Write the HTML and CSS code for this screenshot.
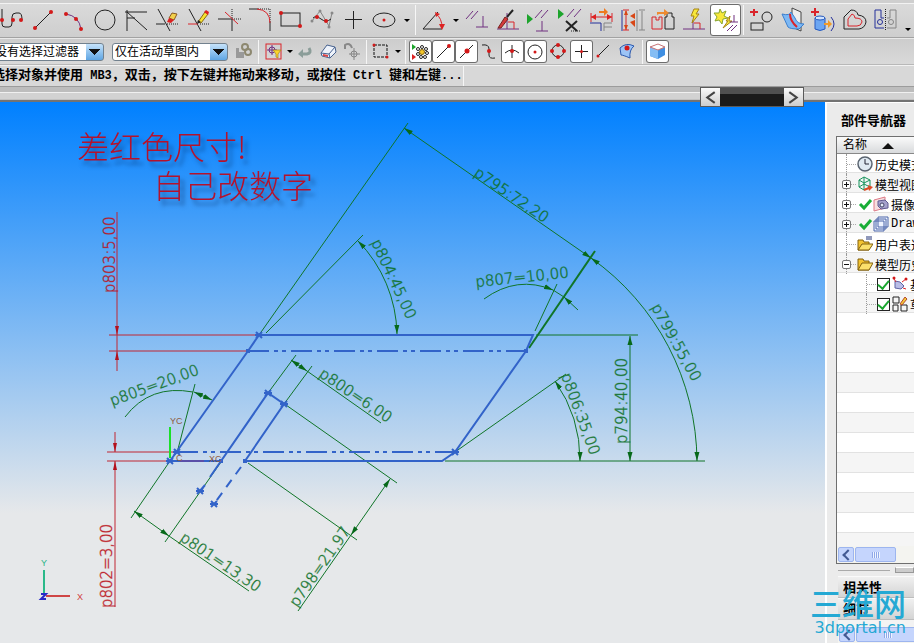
FILE: index.html
```html
<!DOCTYPE html>
<html lang="zh-CN">
<head>
    <meta charset="UTF-8">
    <meta name="viewport" content="width=device-width, initial-scale=1.0">
    <title>草图</title>
    <link rel="stylesheet" href="styles.css">
</head>
<body>
    <header class="toolbars">
        <div class="strip"></div>

        <!-- Sketch tools -->
        <div class="toolbar sketch-bar">
            <button class="tool" aria-label="轮廓"><svg viewBox="0 0 31 32"><path class="k" d="M5 5V20Q5 23 8 23H12Q15 23 15 19V13Q15 9 19 9H22Q25 9 25 16"/><g class="dot"><circle cx="5" cy="16" r="2"/><circle cx="16" cy="16" r="2"/><circle cx="24" cy="16" r="2"/></g></svg></button>
            <button class="tool" aria-label="直线"><svg viewBox="0 0 31 32"><path class="k" d="M7 24L23 8"/><g class="dot"><circle cx="7" cy="24" r="2"/><circle cx="23" cy="8" r="2"/></g></svg></button>
            <button class="tool" aria-label="圆弧"><svg viewBox="0 0 31 32"><path class="p" d="M7 10Q20 12 22 25"/><g class="dot"><circle cx="7" cy="10" r="2"/><circle cx="17" cy="15" r="2"/><circle cx="22" cy="25" r="2"/></g></svg></button>
            <button class="tool" aria-label="圆"><svg viewBox="0 0 31 32"><circle class="k" cx="15" cy="16" r="10"/></svg></button>
            <button class="tool" aria-label="派生直线"><svg viewBox="0 0 31 32"><path class="k" d="M6 6V27M4 8H26M6 8L26 26M6 14H14"/></svg></button>
            <button class="tool" aria-label="快速修剪"><svg viewBox="0 0 31 32"><path class="k" d="M6 5L18 27M4 20H13"/><path class="k dots" d="M15 20H27"/><path d="M17 14L20 9L25 10L22 16Z" fill="#f2d04a" stroke="#8a5a20"/><path d="M15 18L17 14L22 16L19 19Z" fill="#d22"/></svg></button>
            <button class="tool" aria-label="快速延伸"><svg viewBox="0 0 31 32"><path class="k" d="M6 5L18 27"/><path class="r" d="M5 20H15"/><path class="k dots" d="M17 20H27"/><path d="M15 18L22 8L25 10L18 19Z" fill="#f7e430" stroke="#8a6a10"/><path d="M21 8L23 6L26 8L25 11Z" fill="#d22"/><path d="M14 20L15 16L18 18Z" fill="#222"/></svg></button>
            <button class="tool" aria-label="制作拐角"><svg viewBox="0 0 31 32"><path class="k" d="M18 15V27M4 15H18"/><path class="k dots" d="M18 5V15M18 15H27"/><path class="r" d="M11 8L24 20"/></svg></button>
            <button class="tool" aria-label="圆角"><svg viewBox="0 0 31 32"><path class="k" d="M4 5H13M25 18V27"/><path class="k dots" d="M13 5H25V18"/><path class="r" d="M12 5Q25 6 25 19"/></svg></button>
            <button class="tool" aria-label="矩形"><svg viewBox="0 0 31 32"><rect class="k" x="5" y="9" width="19" height="13"/><g class="dot"><circle cx="5" cy="9" r="2"/><circle cx="24" cy="22" r="2"/></g></svg></button>
            <button class="tool" aria-label="艺术样条"><svg viewBox="0 0 31 32"><path class="g" d="M5 17L13 7L22 22L25 9"/><path class="k" d="M6 14Q9 11 14 15T24 15"/><g fill="#888"><circle cx="5" cy="17" r="1.5"/><circle cx="13" cy="7" r="1.5"/><circle cx="25" cy="9" r="1.5"/><circle cx="22" cy="23" r="1.5"/></g><g class="dot"><circle cx="10" cy="13" r="2"/><circle cx="19" cy="17" r="2"/></g></svg></button>
            <button class="tool" aria-label="点"><svg viewBox="0 0 31 32"><path class="k" d="M15.5 7V25M7 15.5H24"/></svg></button>
            <button class="tool" aria-label="椭圆"><svg viewBox="0 0 31 32"><ellipse class="k" cx="15" cy="16" rx="11" ry="7"/><circle class="dot" cx="15" cy="16" r="1.5"/></svg></button>
            <button class="caret" aria-label="更多曲线"></button>
            <span class="sep"></span>
            <button class="tool" aria-label="自动判断的尺寸"><svg viewBox="0 0 31 32"><path class="k" d="M24 25H5L20 8"/><path class="r" d="M18 10Q24 14 24 24"/><path d="M17 8L22 10L18 13ZM21 20H27L24 26Z" fill="#d22"/></svg></button>
            <button class="caret" aria-label="更多尺寸"></button>
            <button class="tool" aria-label="约束"><svg viewBox="0 0 31 32"><path class="p" d="M4 15L11 7M9 15L16 7M21 12V23M14 23H26"/></svg></button>
            <button class="tool" aria-label="自动约束"><svg viewBox="0 0 31 32"><path class="p" d="M4 25H26M14 9V25"/><path class="r" d="M15 18H21V25"/><path d="M5 24L12 13L15 15L8 24Z" fill="#d43a3a" stroke="#722"/><path class="k" d="M14 13L20 6" stroke-width="2"/></svg></button>
            <button class="tool" aria-label="显示约束"><svg viewBox="0 0 31 32"><path d="M3 10L9 15L3 20Z" fill="#1da42c"/><path class="p" d="M11 14L18 6M17 14L24 6M18 17V27M12 27H24"/></svg></button>
            <button class="tool" aria-label="移除约束"><svg viewBox="0 0 31 32"><path d="M3 5L9 10L3 15Z" fill="#1da42c"/><path class="p" d="M12 13L19 5M19 13L26 5"/><path class="k" d="M11 17L22 27M22 17L11 27" stroke-width="2"/><path class="k dots" d="M16 27H26"/></svg></button>
            <button class="tool" aria-label="动画尺寸"><svg viewBox="0 0 31 32"><path class="r" d="M5 9V18M26 9V18M5 13H26"/><path d="M5 13L10 10V16ZM26 13L21 10V16Z" fill="#d22"/><path d="M13 7H18V4L22 8L18 12V9H13Z" fill="#ee7a20"/><path class="b" d="M4 19H15V27" fill="#fff"/><path class="g" d="M26 19H18V27M26 23H18"/></svg></button>
            <button class="tool" aria-label="转换参考"><svg viewBox="0 0 31 32"><path class="b" d="M5 6V27"/><path class="r" d="M9 7V26M6 6H12M6 26H12"/><path d="M7 11L9 6L11 11ZM7 21L9 26L11 21ZM18 9V15L13 12ZM13 18L18 16V23Z" fill="#d84716"/><path class="g" d="M25 7V26M22 6H28M22 26H28M20 6V27"/></svg></button>
            <button class="tool" aria-label="备选解"><svg viewBox="0 0 31 32"><path class="r" d="M4 25V13H8V16H11V13H14V25Z"/><path class="k" d="M17 25V13H19V9H24V13H26V25Z"/><path d="M9 11V8H16V5L21 9L16 12V10H11Z" fill="#ee8a30"/></svg></button>
            <button class="tool" aria-label="推断约束"><svg viewBox="0 0 31 32"><path class="p" d="M4 25H26M14 16V25"/><path class="r" d="M15 19H21V25"/><path d="M15 5L12 12H15L13 19L20 10H17L20 5Z" fill="#f8e83a" stroke="#a58315"/></svg></button>
            <button class="tool active" aria-label="创建推断约束"><svg viewBox="0 0 31 32"><path d="M10 5L12 9L16 7L14 12L18 14L13 15L12 20L9 16L5 17L7 13L4 9L9 9Z" fill="#f8e83a" stroke="#89a62f"/><path d="M20 12L16 17H18L13 24L22 17H19Z" fill="#f8e83a" stroke="#a58315"/><path class="p" d="M24 11V18M20 18H28M17 27L23 21M21 27L27 21"/></svg></button>
            <span class="sep"></span>
            <button class="tool" aria-label="偏置曲线"><svg viewBox="0 0 31 32"><path class="r" d="M8 5V12M4 8H12" stroke-width="2"/><circle class="k" cx="21" cy="13" r="5"/><rect class="k" x="5" y="19" width="12" height="7"/></svg></button>
            <button class="tool" aria-label="相交曲线"><svg viewBox="0 0 31 32"><path d="M15 4L24 8V27L15 23Z" fill="#eee" stroke="#444"/><path d="M5 10Q13 12 14 8L18 14Q20 20 27 20L22 25Q13 25 11 23Z" fill="#7db8f4" stroke="#3b7fce"/><path class="r" d="M13 10Q13 17 20 23" stroke-width="2"/></svg></button>
            <button class="tool" aria-label="投影曲线"><svg viewBox="0 0 31 32"><path class="r" d="M7 4V12M3 8H11" stroke-width="2"/><path d="M7 14V25Q12 28 17 25V14Z" fill="#6ca6f2" stroke="#2659bd"/><ellipse cx="12" cy="14" rx="5" ry="2" fill="#cfe3ff" stroke="#2659bd"/><path d="M16 19H20V16L24 20L20 24V21H16Z" fill="#f09a28"/><path class="b" d="M23 13Q29 20 23 27"/></svg></button>
            <button class="tool" aria-label="偏置轮廓"><svg viewBox="0 0 31 32"><path class="k" d="M5 25V13L12 6Q18 6 19 11Q27 12 27 18Q26 24 20 25Z"/><path class="r" d="M9 22V15L13 10Q16 11 16 14Q23 14 23 18Q22 22 18 22Z"/></svg></button>
            <button class="tool" aria-label="镜像曲线"><svg viewBox="0 0 31 32"><path class="b" d="M14 14H11V6H5V24H14"/><circle class="b" cx="10" cy="18" r="2.500"/><path class="g" d="M17 14H20V6H26V24H17"/><circle class="g" cx="21" cy="18" r="2.500"/><path class="k dots" d="M15.500 5V27"/></svg></button>
            <button class="caret low" aria-label="工具条选项"></button>
        </div>

        <!-- Selection filters and snap points -->
        <div class="toolbar select-bar">
            <select class="filter filter-type" aria-label="选择过滤器"><option>没有选择过滤器</option></select>
            <select class="filter filter-scope" aria-label="选择范围"><option>仅在活动草图内</option></select>
            <button class="snap" aria-label="规则"><svg viewBox="0 0 23 23"><path d="M4 8H7V12H12V18H4Z" fill="#999"/><circle cx="13" cy="7" r="3" fill="none" stroke="#8d8870" stroke-width="2"/><circle cx="16" cy="12" r="3" fill="none" stroke="#8d8870" stroke-width="2"/></svg></button>
            <span class="sep"></span>
            <button class="snap" aria-label="选择优先级"><svg viewBox="0 0 23 23"><rect class="r" x="4" y="4" width="15" height="15"/><path class="p" d="M5 10H15M10 5V15"/><circle class="p" cx="10" cy="10" r="3"/><path d="M11 10H19L16 14V18L14 17V14Z" fill="#fbd52c" stroke="#a8831b" stroke-width=".7"/></svg></button>
            <button class="caret" aria-label="选择优先级选项"></button>
            <button class="snap" aria-label="撤消选择"><svg viewBox="0 0 23 23"><path d="M7 14H13Q18 13 15 8" fill="none" stroke="#8b9d99" stroke-width="3"/><path d="M9 9V18L4 14Z" fill="#8b9d99"/></svg></button>
            <button class="snap" aria-label="取消全选"><svg viewBox="0 0 23 23"><path d="M4 13L10 5L18 7L19 12L13 18L5 16Z" fill="#eef3fb" stroke="#46618e"/><path d="M4 13L12 14L18 7M12 14L13 18" fill="none" stroke="#46618e"/><path d="M6 14L11 15V17L6 16Z" fill="#d44"/></svg></button>
            <button class="snap" aria-label="查找"><svg viewBox="0 0 23 23"><path d="M5 9V5Q10 2 12 8" fill="none" stroke="#888" stroke-width="2"/><path class="g" d="M9 14H20M14 8V20"/><circle class="g" cx="14" cy="14" r="3"/></svg></button>
            <span class="sep"></span>
            <button class="snap" aria-label="矩形选择"><svg viewBox="0 0 23 23"><rect x="4" y="5" width="13" height="12" fill="none" stroke="#111" stroke-dasharray="3 1"/><circle class="dot" cx="4" cy="5" r="1.500"/><circle class="dot" cx="17" cy="17" r="1.500"/></svg></button>
            <button class="caret" aria-label="选择方式"></button>
            <span class="sep"></span>
            <button class="snap active" aria-label="启用捕捉点"><svg viewBox="0 0 23 23"><path d="M3 4L7 7L3 10Z" fill="#1da42c"/><path d="M3 14L7 17L3 20Z" fill="#d22"/><g fill="#fff" stroke="#222"><circle cx="13" cy="7" r="1.500"/><circle cx="17" cy="9" r="1.500"/><circle cx="18" cy="13" r="1.500"/><circle cx="16" cy="17" r="1.500"/><circle cx="12" cy="17" r="1.500"/><circle cx="9" cy="14" r="1.500"/><circle cx="9" cy="9" r="1.500"/></g><circle cx="13" cy="12" r="2.500" fill="#f5c92c" stroke="#85630e"/></svg></button>
            <button class="snap active" aria-label="终点"><svg viewBox="0 0 23 23"><path class="k" d="M5 18L17 6"/><circle class="dot" cx="17" cy="6" r="2"/></svg></button>
            <button class="snap active" aria-label="中点"><svg viewBox="0 0 23 23"><path class="k" d="M5 18L18 5"/><circle class="dot" cx="12" cy="11" r="2.500"/></svg></button>
            <button class="snap" aria-label="控制点"><svg viewBox="0 0 23 23"><path class="k" d="M4 5Q11 4 11 9V15Q11 19 17 18"/><circle class="dot" cx="11" cy="11" r="2"/></svg></button>
            <button class="snap active" aria-label="交点"><svg viewBox="0 0 23 23"><path class="k" d="M4 13Q11 7 18 13M11 5V18"/><circle class="dot" cx="11" cy="11" r="2"/></svg></button>
            <button class="snap active" aria-label="圆弧中心"><svg viewBox="0 0 23 23"><circle class="k" cx="11" cy="12" r="7"/><circle class="dot" cx="11" cy="12" r="1.500"/></svg></button>
            <button class="snap" aria-label="象限点"><svg viewBox="0 0 23 23"><circle class="k" cx="11" cy="11" r="6"/><g class="dot"><circle cx="11" cy="5" r="2"/><circle cx="17" cy="11" r="2"/><circle cx="11" cy="17" r="2"/><circle cx="5" cy="11" r="2"/></g></svg></button>
            <button class="snap active" aria-label="现有点"><svg viewBox="0 0 23 23"><path class="k" d="M5 11.500H18M11.500 5V18"/><circle class="dot" cx="11.500" cy="11.500" r="1.500"/></svg></button>
            <button class="snap" aria-label="曲线上的点"><svg viewBox="0 0 23 23"><path class="k" d="M4 17L16 5"/><circle class="dot" cx="5" cy="16" r="1.500"/></svg></button>
            <button class="snap" aria-label="面上的点"><svg viewBox="0 0 23 23"><path d="M4 8Q10 2 18 6Q13 10 14 18Q7 15 5 15Z" fill="#9cc4f6" stroke="#2c58ad"/><circle class="dot" cx="11" cy="8" r="2.500"/></svg></button>
            <span class="sep"></span>
            <button class="snap active" aria-label="着色"><svg viewBox="0 0 23 23"><path d="M4 7L12 4L19 7V15L12 19L4 16Z" fill="#3f8fe2"/><path d="M4 7L12 10V19L4 16Z" fill="#84bdf4"/><path d="M4 7L12 4L19 7L12 10Z" fill="#fff" stroke="#c77"/></svg></button>
        </div>

        <div class="prompt"><p class="prompt-text">选择对象并使用<span class="latin"> MB3</span>，双击，按下左键并拖动来移动，或按住<span class="latin"> Ctrl </span>键和左键<span class="latin">...</span></p></div>
        <div class="dock-edge"></div>
        <div class="slide-bar">
            <button class="slide-btn" aria-label="向左"><svg viewBox="0 0 18 18"><path d="M13 4L6 9L13 14"/></svg></button>
            <span class="slide-track"></span>
            <button class="slide-btn" aria-label="向右"><svg viewBox="0 0 18 18"><path d="M5 4L12 9L5 14"/></svg></button>
        </div>
    </header>

    <div class="workspace">
        <main class="canvas">
            <svg class="drawing" viewBox="0 102 825 541" preserveAspectRatio="xMinYMin meet">
                <defs>
                    <marker id="arrow" markerUnits="userSpaceOnUse" markerWidth="10" markerHeight="6" refX="9" refY="3" orient="auto-start-reverse"><path d="M0 0.500L9 3L0 5.500Z" fill="#07691a"/></marker>
                    <marker id="arrowRed" markerUnits="userSpaceOnUse" markerWidth="10" markerHeight="6" refX="9" refY="3" orient="auto"><path d="M0 1L9 3L0 5Z" fill="#b3101c"/></marker>
                    <path id="star" d="M-4 0H4M-3 -3L3 3M3 -3L-3 3"/>
                </defs>

                <g class="note">
                    <text x="77" y="159">差红色尺寸!</text>
                    <text x="153" y="198">自己改数字</text>
                </g>

                <!-- Green dimensions -->
                <g class="dim">
                    <path d="M259 335L408 123M266 333L363 235M535 331L557 284M536 335H638M445 461H705M455 452L566 374"/>
                    <path d="M529 348L595 251" stroke-width="2"/>
                    <path d="M178 449L195 384M170 461L131 518M221 462L165 542M268 393L296 355M284 404L312 366M248 463L357 540M286 405L397 483"/>
                    <path class="both" d="M404 128L591 258"/>
                    <path class="both" d="M358 241A137 137 0 0 1 397 334"/>
                    <path class="both" d="M591 258A251 251 0 0 1 697 461"/>
                    <path class="both" d="M555 381A137 137 0 0 1 580 461"/>
                    <path class="both" d="M630 336V461"/>
                    <path class="head" d="M484 299Q517 275 553 290"/>
                    <path class="tail" d="M564 297L578 310"/>
                    <path d="M553 290L564 297"/>
                    <path d="M125 417Q150 384 193 392"/>
                    <path class="both" d="M194 392L212 400"/>
                    <path class="both" d="M291 360L307 371"/>
                    <path d="M307 371L381 423"/>
                    <path class="both" d="M134 511L169 536"/>
                    <path d="M169 536L249 591"/>
                    <path class="both" d="M390 479L351 535"/>
                    <path d="M351 535L298 611"/>
                </g>

                <!-- Red dimensions -->
                <g class="dim-red">
                    <path d="M109 335H257M109 351H246M107 452H173M107 461H170"/>
                    <path class="head" d="M117 212V335"/>
                    <path d="M117 335V351"/>
                    <path class="head" d="M117 371V351"/>
                    <path class="head" d="M115 432V452"/>
                    <path class="head" d="M115 607V461"/>
                </g>

                <!-- Sketch curves -->
                <g class="curve">
                    <path d="M170 461L248 351L259 335H533L526 351L455 452L442 461H245L284 404L268 393L210 477M170 461H221"/>
                    <path d="M248 351H526M177 452H455" stroke-dasharray="21 5 4 4 4 5"/>
                    <path d="M241 467L214 504" stroke-dasharray="9 7"/>
                    <path d="M205 485L200 491"/>
                </g>
                <g class="points">
                    <use href="#star" x="259" y="335"/><use href="#star" x="268" y="393"/><use href="#star" x="284" y="404"/><use href="#star" x="170" y="461"/>
                    <use href="#star" x="200" y="491"/><use href="#star" x="214" y="504"/><use href="#star" x="177" y="452"/><use href="#star" x="455" y="452"/>
                    <path d="M246 351H250M524 351H528M219 461H223M243 461H247" stroke-width="4"/>
                </g>

                <g class="dim-text">
                    <text transform="translate(473 175) rotate(34)">p795:72,20</text>
                    <text transform="translate(371 242) rotate(65)">p804:45,00</text>
                    <text transform="translate(476 287) rotate(-6)">p807=10,00</text>
                    <text transform="translate(651 307) rotate(61)">p799:55,00</text>
                    <text transform="translate(627 444) rotate(-90)">p794:40,00</text>
                    <text transform="translate(561 375) rotate(70)">p806:35,00</text>
                    <text transform="translate(112 406) rotate(-20)">p805=20,00</text>
                    <text transform="translate(318 376) rotate(34)">p800=6,00</text>
                    <text transform="translate(179 540) rotate(34)">p801=13,30</text>
                    <text transform="translate(297 608) rotate(-55)">p798=21,97</text>
                    <text class="red" transform="translate(115 293) rotate(-90)">p803:5,00</text>
                    <text class="red" transform="translate(112 608) rotate(-90)">p802=3,00</text>
                </g>

                <!-- Work and view coordinate axes -->
                <path d="M170 427V458" stroke="#1be02a" stroke-width="2"/>
                <path d="M180 461H204" stroke="#5a4fa8" stroke-width="2"/>
                <g class="axis-text">
                    <text x="170" y="424">YC</text>
                    <text x="209" y="462">XC</text>
                    <text x="176" y="461">C</text>
                    <text x="41" y="566" fill="#27b487">Y</text>
                    <text x="77" y="600" fill="#d23c3c">X</text>
                </g>
                <path d="M44 570V595" stroke="#2bb98a" stroke-width="2"/>
                <path d="M46 596H70" stroke="#cf4646" stroke-width="2"/>
                <path d="M41 594H46L41 599H46" fill="none" stroke="#2a2ac6" stroke-width="2"/>
            </svg>
        </main>

        <aside class="navigator">
            <h2 class="panel-title">部件导航器</h2>
            <div class="tree">
                <div class="tree-head">名称<span class="sort"></span></div>
                <ul class="tree-rows">
                    <li class="row"><span class="toggle"></span><svg class="ico" viewBox="0 0 16 16"><circle cx="8" cy="8" r="7" fill="#dfe9f2" stroke="#5a6470" stroke-width="1.500"/><path d="M8 3V8H12" fill="none" stroke="#223"/></svg>历史模式</li>
                    <li class="row"><span class="toggle plus"></span><svg class="ico" viewBox="0 0 16 16"><path d="M2 4L7 1L13 4V11L7 14L2 11ZM2 4L7 7L13 4M7 1V14M2 11L7 8L13 11" fill="none" stroke="#14925a"/><path d="M7 14L12 12" stroke="#e04a26" stroke-width="2"/><path d="M11 9L16 11L12 15Z" fill="#e04a26"/></svg>模型视图</li>
                    <li class="row"><span class="toggle plus"></span><svg class="ico tick" viewBox="0 0 16 16"><path d="M3 8L7 12L14 4"/></svg><svg class="ico" viewBox="0 0 16 16"><path d="M1 4L12 1V12L1 15Z" fill="#f9dfe0" stroke="#dd7a86"/><path d="M5 5L12 4L15 7V12L8 13L5 10Z" fill="#a5a1cc" stroke="#615b91"/><circle cx="9" cy="9" r="2" fill="#e8eefc" stroke="#446"/></svg>摄像机</li>
                    <li class="row"><span class="toggle plus"></span><svg class="ico tick" viewBox="0 0 16 16"><path d="M3 8L7 12L14 4"/></svg><svg class="ico" viewBox="0 0 16 16"><path d="M5 1H15V11H5ZM3 3H13V13H3ZM1 5H11V15H1Z" fill="#eef3ff" stroke="#4a64a8"/></svg><span class="latin">Drawing</span></li>
                    <li class="row"><span class="toggle"></span><svg class="ico" viewBox="0 0 16 16"><path d="M1 14V4H6L7 6H12V14Z" fill="#f3c331" stroke="#82600e"/><path d="M1 14L5 8H16L12 14Z" fill="#fbe06c" stroke="#82600e"/><path d="M9 1H15M9 3H15" stroke="#223377"/></svg>用户表达式</li>
                    <li class="row"><span class="toggle plus minus"></span><svg class="ico" viewBox="0 0 16 16"><path d="M1 14V3H6L7 5H12V14Z" fill="#f3c331" stroke="#82600e"/><path d="M1 14L5 7H16L12 14Z" fill="#fbe06c" stroke="#82600e"/></svg>模型历史记录</li>
                    <li class="row child"><label><input type="checkbox" class="check" checked><svg class="ico" viewBox="0 0 16 16"><path d="M3 5V12L9 13L12 10L8 6Z" fill="#b9bde6" stroke="#5f64a5"/><path class="r" d="M10 6L14 3M2 3L4 6M11 12L14 13"/><circle class="dot" cx="14" cy="3" r="1.500"/><circle class="dot" cx="2" cy="2" r="1.500"/></svg>基准坐标系</label></li>
                    <li class="row child"><label><input type="checkbox" class="check" checked><svg class="ico" viewBox="0 0 16 16"><path class="k" d="M1 1H7V7H1ZM1 9H6V15H1ZM9 9H15V15H9Z"/><path d="M8 8L13 1L15 3L10 9Z" fill="#f6c936" stroke="#b4472b"/></svg>草图</label></li>
                </ul>
                <div class="scrollbar"><button class="scroll-left" aria-label="向左滚动"></button><span class="thumb"></span></div>
            </div>
            <div class="splitter"><span class="grip"></span></div>
            <button class="section">相关性</button>
            <button class="section">细节</button>
            <div class="section-end"></div>
            <div class="scrollbar"><button class="scroll-left" aria-label="向左滚动"></button><span class="thumb wide"></span></div>
        </aside>
    </div>

    <div class="site-mark"><span class="mark-name">三维网</span><span class="mark-url">3dportal.cn</span></div>
</body>
</html>
```
FILE: styles.css
```css
* {
    margin: 0;
    padding: 0;
    box-sizing: border-box;
}

body {
    display: flex;
    flex-direction: column;
    position: relative;
    height: 100vh;
    overflow: hidden;
    background: #ececec;
    color: #000;
    font-family: "Liberation Sans", "Noto Sans CJK SC", sans-serif;
    font-size: 12px;
}

button {
    border: none;
    background: none;
    font: inherit;
    color: inherit;
}

/* Icon strokes */
.k, .r, .p, .b, .g {
    fill: none;
    stroke: #222;
}

.r { stroke: #d9242b; }
.p { stroke: #703080; }
.b { stroke: #25309a; }
.g { stroke: #858585; }
.dots { stroke-dasharray: 1 1; }
.dot { fill: #d31919; }

/* Toolbars */
.toolbars {
    position: relative;
    flex: none;
    background: #d6d6d6;
}

.strip {
    height: 4px;
    border-bottom: 1px solid #f2f2f2;
    background: #cfcfcf;
}

.toolbar {
    display: flex;
    align-items: center;
    overflow: hidden;
}

.sketch-bar {
    height: 34px;
    padding-bottom: 1px;
    margin-left: -3px;
    border-bottom: 1px solid #a2a2a2;
    background: linear-gradient(#dadada, #cecece);
}

.select-bar {
    height: 27px;
    border-top: 1px solid #e8e8e8;
    border-bottom: 1px solid #b8b8b8;
    background: linear-gradient(#cdcdcd, #d9d9d9);
}

.tool {
    flex: none;
    width: 31px;
    height: 32px;
}

.tool svg,
.snap svg {
    display: block;
    width: 100%;
}

.tool.active,
.snap.active {
    border-radius: 3px;
    background: #fff;
    box-shadow: inset 0 0 0 1px #6d6d6d;
}

.snap {
    flex: none;
    width: 23px;
    height: 23px;
}

.caret {
    flex: none;
    width: 13px;
    height: 20px;
    display: flex;
    align-items: center;
    justify-content: center;
}

.select-bar .caret {
    width: 9px;
}

.caret::after {
    content: "";
    border: 3px solid transparent;
    border-top-color: #000;
    border-bottom: none;
}

.caret.low {
    align-self: flex-end;
    height: 14px;
}

.sep {
    flex: none;
    width: 1px;
    height: 30px;
    margin: 0 2px;
    background: #f6f6f6;
}

.select-bar .sep {
    height: 24px;
    margin: 0 3px;
}

.filter {
    flex: none;
    height: 18px;
    padding: 0 20px 0 2px;
    border: 1px solid #72818e;
    border-radius: 3px;
    appearance: none;
    color: #000;
    font-family: "Liberation Sans", "Noto Sans CJK SC", sans-serif;
    font-size: 12px;
    line-height: 16px;
    background:
        conic-gradient(from -45deg at 50% 100%, #111 90deg, transparent 0) right 3px top 5px / 11px 6px no-repeat,
        linear-gradient(#c5e2fa, #5fa6e4) right / 17px 100% no-repeat,
        #fff;
}

.filter-type {
    width: 112px;
    margin-left: -8px;
    margin-right: 8px;
}

.filter-scope {
    width: 116px;
    margin-right: 4px;
}

.prompt {
    height: 22px;
    border-top: 1px solid #f2f2f2;
    border-bottom: 1px solid #9c9c9c;
    background: #d8d8d8;
    overflow: hidden;
}

.prompt-text {
    display: inline-block;
    height: 20px;
    margin-left: -8px;
    border-right: 1px solid #f6f6f6;
    white-space: pre;
    font-size: 13px;
    font-weight: bold;
    line-height: 18px;
}

.latin {
    font-family: "Liberation Mono", monospace;
    font-size: 12px;
}

.dock-edge {
    height: 15px;
    border-bottom: 2px solid #737373;
    background: linear-gradient(#bdbdbd 0 5px, #f0f0f0 5px 6px, #d2d2d2 6px 12px, #b0b0b0);
}

.slide-bar {
    display: flex;
    position: absolute;
    right: 110px;
    bottom: -5px;
    height: 20px;
    border: 1px solid #5a5a5a;
}

.slide-btn {
    width: 19px;
    background: linear-gradient(#fafafa, #cdcdcd);
}

.slide-btn svg {
    display: block;
    fill: none;
    stroke: #444;
    stroke-width: 2;
}

.slide-track {
    width: 64px;
    background: linear-gradient(#505050 0 6px, #1b1b1b 6px);
}

/* Graphics window */
.workspace {
    display: flex;
    flex: 1;
    min-height: 0;
}

.canvas {
    flex: 1;
    min-width: 0;
    background: linear-gradient(#0080ff, #e6e8ea 76%);
}

.drawing {
    display: block;
    width: 100%;
    height: 100%;
}

.note {
    fill: #b5122c;
    font-family: "Noto Sans CJK SC", sans-serif;
    font-size: 32px;
    font-weight: 300;
    filter: drop-shadow(4px 5px 2px rgba(0, 30, 80, 0.5));
}

.dim {
    fill: none;
    stroke: #107528;
}

.both {
    marker-start: url(#arrow);
    marker-end: url(#arrow);
}

.head {
    marker-end: url(#arrow);
}

.tail {
    marker-start: url(#arrow);
}

.dim-red {
    fill: none;
    stroke: #c02633;
}

.dim-red .head {
    marker-end: url(#arrowRed);
}

.curve {
    fill: none;
    stroke: #3263c9;
    stroke-width: 2;
}

.points {
    stroke: #3263c9;
    stroke-width: 2;
}

.dim-text {
    fill: #0d7026;
    stroke: rgba(13, 112, 38, 0.4);
    font-family: "DejaVu Sans Light", "DejaVu Sans", sans-serif;
    font-size: 15px;
    font-weight: 200;
}

.dim-text .red {
    fill: #bb1420;
    stroke: rgba(187, 20, 32, 0.4);
}

.axis-text {
    fill: #8f5c42;
    font-family: "Liberation Sans", sans-serif;
    font-size: 9px;
}

/* Part navigator */
.navigator {
    display: flex;
    flex-direction: column;
    flex: 0 0 89px;
    padding-left: 11px;
    border-top: 1px solid #fff;
    border-left: 2px solid #fff;
    background: #ebebeb;
    overflow: hidden;
    white-space: nowrap;
}

.panel-title {
    flex: none;
    height: 33px;
    padding-left: 3px;
    font-size: 13px;
    line-height: 36px;
}

.tree {
    display: flex;
    flex-direction: column;
    flex: 1;
    min-height: 0;
    margin-left: -2px;
    border: 1px solid #6f6f6f;
    border-right: none;
    background: repeating-linear-gradient(#fff 0 19px, #e2e2e2 19px 20px, #f5f5f5 20px 39px, #e2e2e2 39px 40px) 0 16px;
}

.tree-head {
    flex: none;
    height: 17px;
    padding-left: 6px;
    border-bottom: 1px solid #888;
    background: linear-gradient(#fafafa, #d8dadc);
    line-height: 17px;
}

.sort {
    display: inline-block;
    margin-left: 15px;
    border: 6px solid transparent;
    border-top: none;
    border-bottom-color: #111;
}

.tree-rows {
    flex: 1;
    list-style: none;
}

.row,
.row label {
    display: flex;
    align-items: center;
    height: 20px;
}

.row {
    position: relative;
    padding-left: 5px;
}

.row::before {
    content: "";
    position: absolute;
    left: 9px;
    top: 0;
    height: 20px;
    width: 10px;
    border-left: 1px dotted #999;
    background: linear-gradient(90deg, #aaa 50%, transparent 0) 0 50% / 2px 1px repeat-x;
}

.row.child {
    padding-left: 40px;
}

.row.child::before {
    left: 29px;
}

.toggle {
    flex: none;
    width: 9px;
    height: 9px;
    margin-right: 6px;
}

.toggle.plus {
    z-index: 1;
    border: 1px solid #777;
    border-radius: 2px;
    background:
        linear-gradient(#111, #111) center / 5px 1px no-repeat,
        linear-gradient(#111, #111) center / 1px 5px no-repeat,
        #fff;
}

.toggle.minus {
    background: linear-gradient(#111, #111) center / 5px 1px no-repeat, #fff;
}

.ico {
    flex: none;
    width: 16px;
    height: 16px;
    margin-right: 2px;
}

.tick {
    fill: none;
    stroke: #19ae37;
    stroke-width: 3;
    margin-right: 0;
}

.check {
    display: flex;
    align-items: center;
    justify-content: center;
    flex: none;
    width: 13px;
    height: 13px;
    margin-right: 2px;
    border: 1px solid #222;
    appearance: none;
    background: #fff;
}

.check:checked::after {
    content: "";
    width: 5px;
    height: 9px;
    margin-bottom: 2px;
    border: solid #19a62e;
    border-width: 0 2px 2px 0;
    transform: rotate(40deg);
}

.scrollbar {
    display: flex;
    flex: none;
    height: 17px;
    padding: 1px;
    background: #f4f4f0;
}

.scroll-left {
    flex: none;
    width: 16px;
    border: 1px solid #9db5ef;
    border-radius: 2px;
    background: #c5d5fd;
}

.scroll-left::after {
    content: "";
    display: block;
    width: 6px;
    height: 6px;
    margin-left: 5px;
    border: solid #435a92;
    border-width: 0 0 2px 2px;
    transform: rotate(45deg);
}

.thumb {
    flex: none;
    width: 41px;
    margin-left: 1px;
    border: 1px solid #9db5ef;
    border-radius: 2px;
    background: repeating-linear-gradient(90deg, #8fa8e8 0 1px, #eef4fe 1px 2px) center / 8px 6px no-repeat, #c5d5fd;
}

.thumb.wide {
    width: 64px;
}

.splitter {
    display: flex;
    align-items: center;
    flex: none;
    height: 12px;
    background: linear-gradient(#aaa, #aaa) 0 6px / 52px 1px no-repeat;
}

.grip {
    flex: none;
    width: 19px;
    height: 6px;
    margin-left: 57px;
    border: 1px solid #999;
    border-top-color: #fff;
    background: #ccc;
}

.section {
    flex: none;
    height: 22px;
    padding-left: 5px;
    border-top: 1px solid #fafafa;
    border-bottom: 1px solid #bdbdbd;
    background: linear-gradient(#f0f0f0, #d4d4d4);
    font-size: 13px;
    font-weight: bold;
    line-height: 19px;
    text-align: left;
}

.section-end {
    flex: none;
    height: 6px;
    background: #f3f3f3;
}

/* Site mark over the lower right corner */
.site-mark {
    display: flex;
    flex-direction: column;
    align-items: flex-end;
    position: absolute;
    right: 8px;
    bottom: 8px;
    color: #25a9d4;
}

.mark-name {
    font-size: 32px;
    font-weight: 500;
    line-height: 32px;
}

.mark-url {
    font-family: "DejaVu Sans", sans-serif;
    font-size: 16px;
    line-height: 14px;
}
```
